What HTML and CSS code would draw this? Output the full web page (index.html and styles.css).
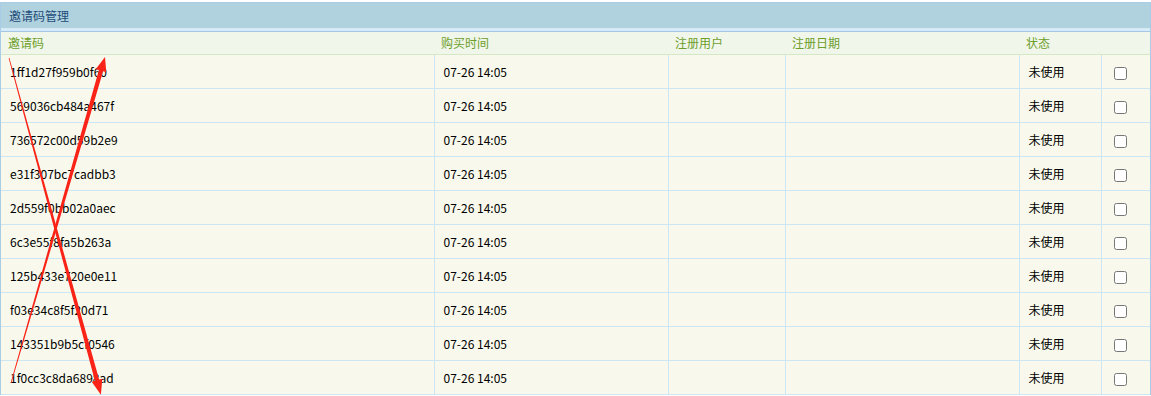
FILE: index.html
```html
<!DOCTYPE html>
<html lang="zh-CN">
<head>
    <meta charset="UTF-8">
    <title>邀请码管理</title>
    <link rel="stylesheet" href="styles.css">
</head>
<body>
    <div class="panel">
        <div class="panel-title">邀请码管理</div>
        <table class="grid">
            <colgroup>
                <col class="c-code"><col class="c-time"><col class="c-user"><col class="c-date"><col class="c-state"><col>
            </colgroup>
            <thead>
                <tr><th>邀请码</th><th>购买时间</th><th>注册用户</th><th>注册日期</th><th>状态</th><th></th></tr>
            </thead>
            <tbody>
                <tr><td>1ff1d27f959b0f60</td><td>07-26 14:05</td><td></td><td></td><td>未使用</td><td><input type="checkbox"></td></tr>
                <tr><td>569036cb484a467f</td><td>07-26 14:05</td><td></td><td></td><td>未使用</td><td><input type="checkbox"></td></tr>
                <tr><td>736572c00d59b2e9</td><td>07-26 14:05</td><td></td><td></td><td>未使用</td><td><input type="checkbox"></td></tr>
                <tr><td>e31f307bc7cadbb3</td><td>07-26 14:05</td><td></td><td></td><td>未使用</td><td><input type="checkbox"></td></tr>
                <tr><td>2d559f0bb02a0aec</td><td>07-26 14:05</td><td></td><td></td><td>未使用</td><td><input type="checkbox"></td></tr>
                <tr><td>6c3e55f8fa5b263a</td><td>07-26 14:05</td><td></td><td></td><td>未使用</td><td><input type="checkbox"></td></tr>
                <tr><td>125b433e720e0e11</td><td>07-26 14:05</td><td></td><td></td><td>未使用</td><td><input type="checkbox"></td></tr>
                <tr><td>f03e34c8f5f20d71</td><td>07-26 14:05</td><td></td><td></td><td>未使用</td><td><input type="checkbox"></td></tr>
                <tr><td>143351b9b5cf0546</td><td>07-26 14:05</td><td></td><td></td><td>未使用</td><td><input type="checkbox"></td></tr>
                <tr><td>1f0cc3c8da6898ad</td><td>07-26 14:05</td><td></td><td></td><td>未使用</td><td><input type="checkbox"></td></tr>
            </tbody>
        </table>
    </div>

    <!-- 标注：红色交叉箭头 -->
    <svg class="marks" width="1151" height="396" viewBox="0 0 1151 396">
        <polygon fill="#fa2318" points="9.4,57.9 99.1,379.6 102.3,378.8 100.9,394.7 91.7,381.7 94.9,380.8 8.6,58.1"/>
        <polygon fill="#fa2318" points="11.4,383.1 103.1,71.3 106.3,72.2 105,57 95.7,69.2 98.9,70.1 10.6,382.9"/>
    </svg>
</body>
</html>
```

FILE: styles.css
```css
* { box-sizing: border-box; }
body {
    margin: 0;
    background: #fff;
    font-family: "Noto Sans CJK SC", sans-serif;
    font-size: 12px;
    color: #000;
}

/* 面板 */
.panel {
    margin-top: 2px;
    border: 1px solid #a9cde6;
    border-bottom: none;
}
.panel-title {
    height: 28px;
    line-height: 25px;
    padding-left: 8px;
    background: #b0d2df;
    border-bottom: 3px solid #d7eaf7;
    color: #1d4b78;
}

/* 表格 */
.grid {
    width: 100%;
    border-collapse: collapse;
    table-layout: fixed;
    border-top: 1px solid #a3c7e5;
}
.c-code { width: 433px; }
.c-time { width: 234px; }
.c-user { width: 117px; }
.c-date { width: 234px; }
.c-state { width: 82px; }

.grid th {
    height: 23px;
    padding: 0 0 1px 7px;
    background: #f1f6ea;
    border-bottom: 1px solid #d3e8c5;
    color: #6c9e2a;
    font-weight: normal;
    text-align: left;
}
.grid td {
    height: 34px;
    padding: 0 0 0 9px;
    background: #f8f9ec;
    border-bottom: 1px solid #cde6f4;
    border-left: 1px solid #cde6f4;
}
.grid td:first-child { border-left: none; }
.grid td input { margin: 0 0 0 3px; vertical-align: middle; }

/* 标注层 */
.marks {
    position: absolute;
    left: 0;
    top: 0;
    pointer-events: none;
}
```
